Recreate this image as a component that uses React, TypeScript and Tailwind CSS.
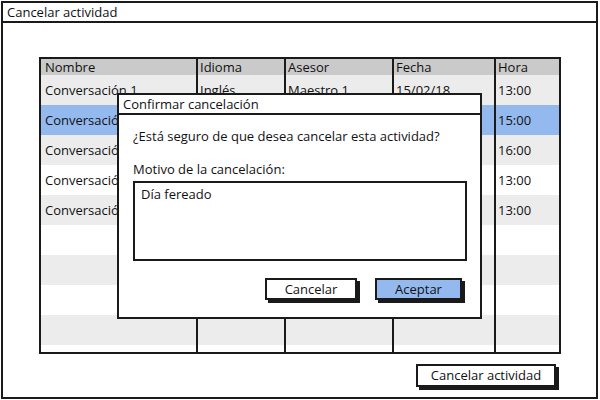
const rows = [
  { nombre: "Conversación 1", idioma: "Inglés", asesor: "Maestro 1", fecha: "15/02/18", hora: "13:00", bg: "bg-[#ececec]" },
  { nombre: "Conversación 2", idioma: "", asesor: "", fecha: "", hora: "15:00", bg: "bg-[#94b9ef]" },
  { nombre: "Conversación 3", idioma: "", asesor: "", fecha: "", hora: "16:00", bg: "bg-[#ececec]" },
  { nombre: "Conversación 4", idioma: "", asesor: "", fecha: "", hora: "13:00", bg: "bg-white" },
  { nombre: "Conversación 5", idioma: "", asesor: "", fecha: "", hora: "13:00", bg: "bg-[#ececec]" },
  { nombre: "", idioma: "", asesor: "", fecha: "", hora: "", bg: "bg-white" },
  { nombre: "", idioma: "", asesor: "", fecha: "", hora: "", bg: "bg-[#ececec]" },
  { nombre: "", idioma: "", asesor: "", fecha: "", hora: "", bg: "bg-white" },
  { nombre: "", idioma: "", asesor: "", fecha: "", hora: "", bg: "bg-[#ececec]" },
  { nombre: "", idioma: "", asesor: "", fecha: "", hora: "", bg: "bg-white" },
];

const cols = "grid grid-cols-[155px_88px_108px_102px_1fr]";

export default function App() {
  return (
    <div className="relative w-[600px] h-[400px] bg-white p-[1px] text-[13px] text-[#111] font-['Open_Sans',sans-serif]">

      {/* WINDOW */}
      <div className="w-[597px] h-[398px] border-2 border-[#1a1a1a] flex flex-col">
        <div className="h-[20px] border-b-2 border-[#1a1a1a] flex items-center pl-[4px] leading-none">
          Cancelar actividad
        </div>

        <div className="pl-[36px] pt-[34px]">
          {/* TABLE */}
          <div className="w-[522px] h-[297px] border-2 border-[#1a1a1a] overflow-hidden leading-none">
            <div className={`${cols} h-[16px] bg-[#cacaca]`}>
              <div className="pl-[4px] flex items-center">Nombre</div>
              <div className="pl-[2px] flex items-center border-l-2 border-[#1a1a1a]">Idioma</div>
              <div className="pl-[2px] flex items-center border-l-2 border-[#1a1a1a]">Asesor</div>
              <div className="pl-[2px] flex items-center border-l-2 border-[#1a1a1a]">Fecha</div>
              <div className="pl-[2px] flex items-center border-l-2 border-[#1a1a1a]">Hora</div>
            </div>
            {rows.map((r, i) => (
              <div key={i} className={`${cols} h-[30px] ${r.bg}`}>
                <div className="pl-[4px] flex items-center whitespace-nowrap">{r.nombre}</div>
                <div className="pl-[2px] flex items-center border-l-2 border-[#1a1a1a]">{r.idioma}</div>
                <div className="pl-[2px] flex items-center border-l-2 border-[#1a1a1a]">{r.asesor}</div>
                <div className="pl-[2px] flex items-center border-l-2 border-[#1a1a1a]">{r.fecha}</div>
                <div className="pl-[2px] flex items-center border-l-2 border-[#1a1a1a]">{r.hora}</div>
              </div>
            ))}
          </div>

          {/* BOTTOM BUTTON */}
          <div className="pl-[377px] pt-[10px]">
            <button className="w-[140px] h-[23px] border-2 border-[#1a1a1a] bg-white shadow-[3px_3px_0_#1a1a1a] flex items-center justify-center leading-none">
              Cancelar actividad
            </button>
          </div>
        </div>
      </div>

      {/* DIALOG */}
      <div className="absolute left-[117px] top-[93px] w-[365px] h-[226px] border-2 border-[#1a1a1a] bg-white flex flex-col leading-none">
        <div className="h-[20px] border-b-2 border-[#1a1a1a] flex items-center pl-[4px]">
          Confirmar cancelación
        </div>
        <div className="pl-[14px] pt-[13px]">
          <div className="h-[16px] flex items-center">¿Está seguro de que desea cancelar esta actividad?</div>
          <div className="h-[16px] flex items-center mt-[17px]">Motivo de la cancelación:</div>
          <div className="mt-[4px] w-[334px] h-[80px] border-2 border-[#1a1a1a] pl-[6px] pt-[5px]">
            Día fereado
          </div>
          <div className="flex mt-[17px] pl-[132px] gap-[18px]">
            <button className="w-[92px] h-[22px] border-2 border-[#1a1a1a] bg-white shadow-[3px_3px_0_#1a1a1a] flex items-center justify-center">
              Cancelar
            </button>
            <button className="w-[87px] h-[22px] border-2 border-[#1a1a1a] bg-[#94b9ef] shadow-[3px_3px_0_#1a1a1a] flex items-center justify-center">
              Aceptar
            </button>
          </div>
        </div>
      </div>
    </div>
  );
}
